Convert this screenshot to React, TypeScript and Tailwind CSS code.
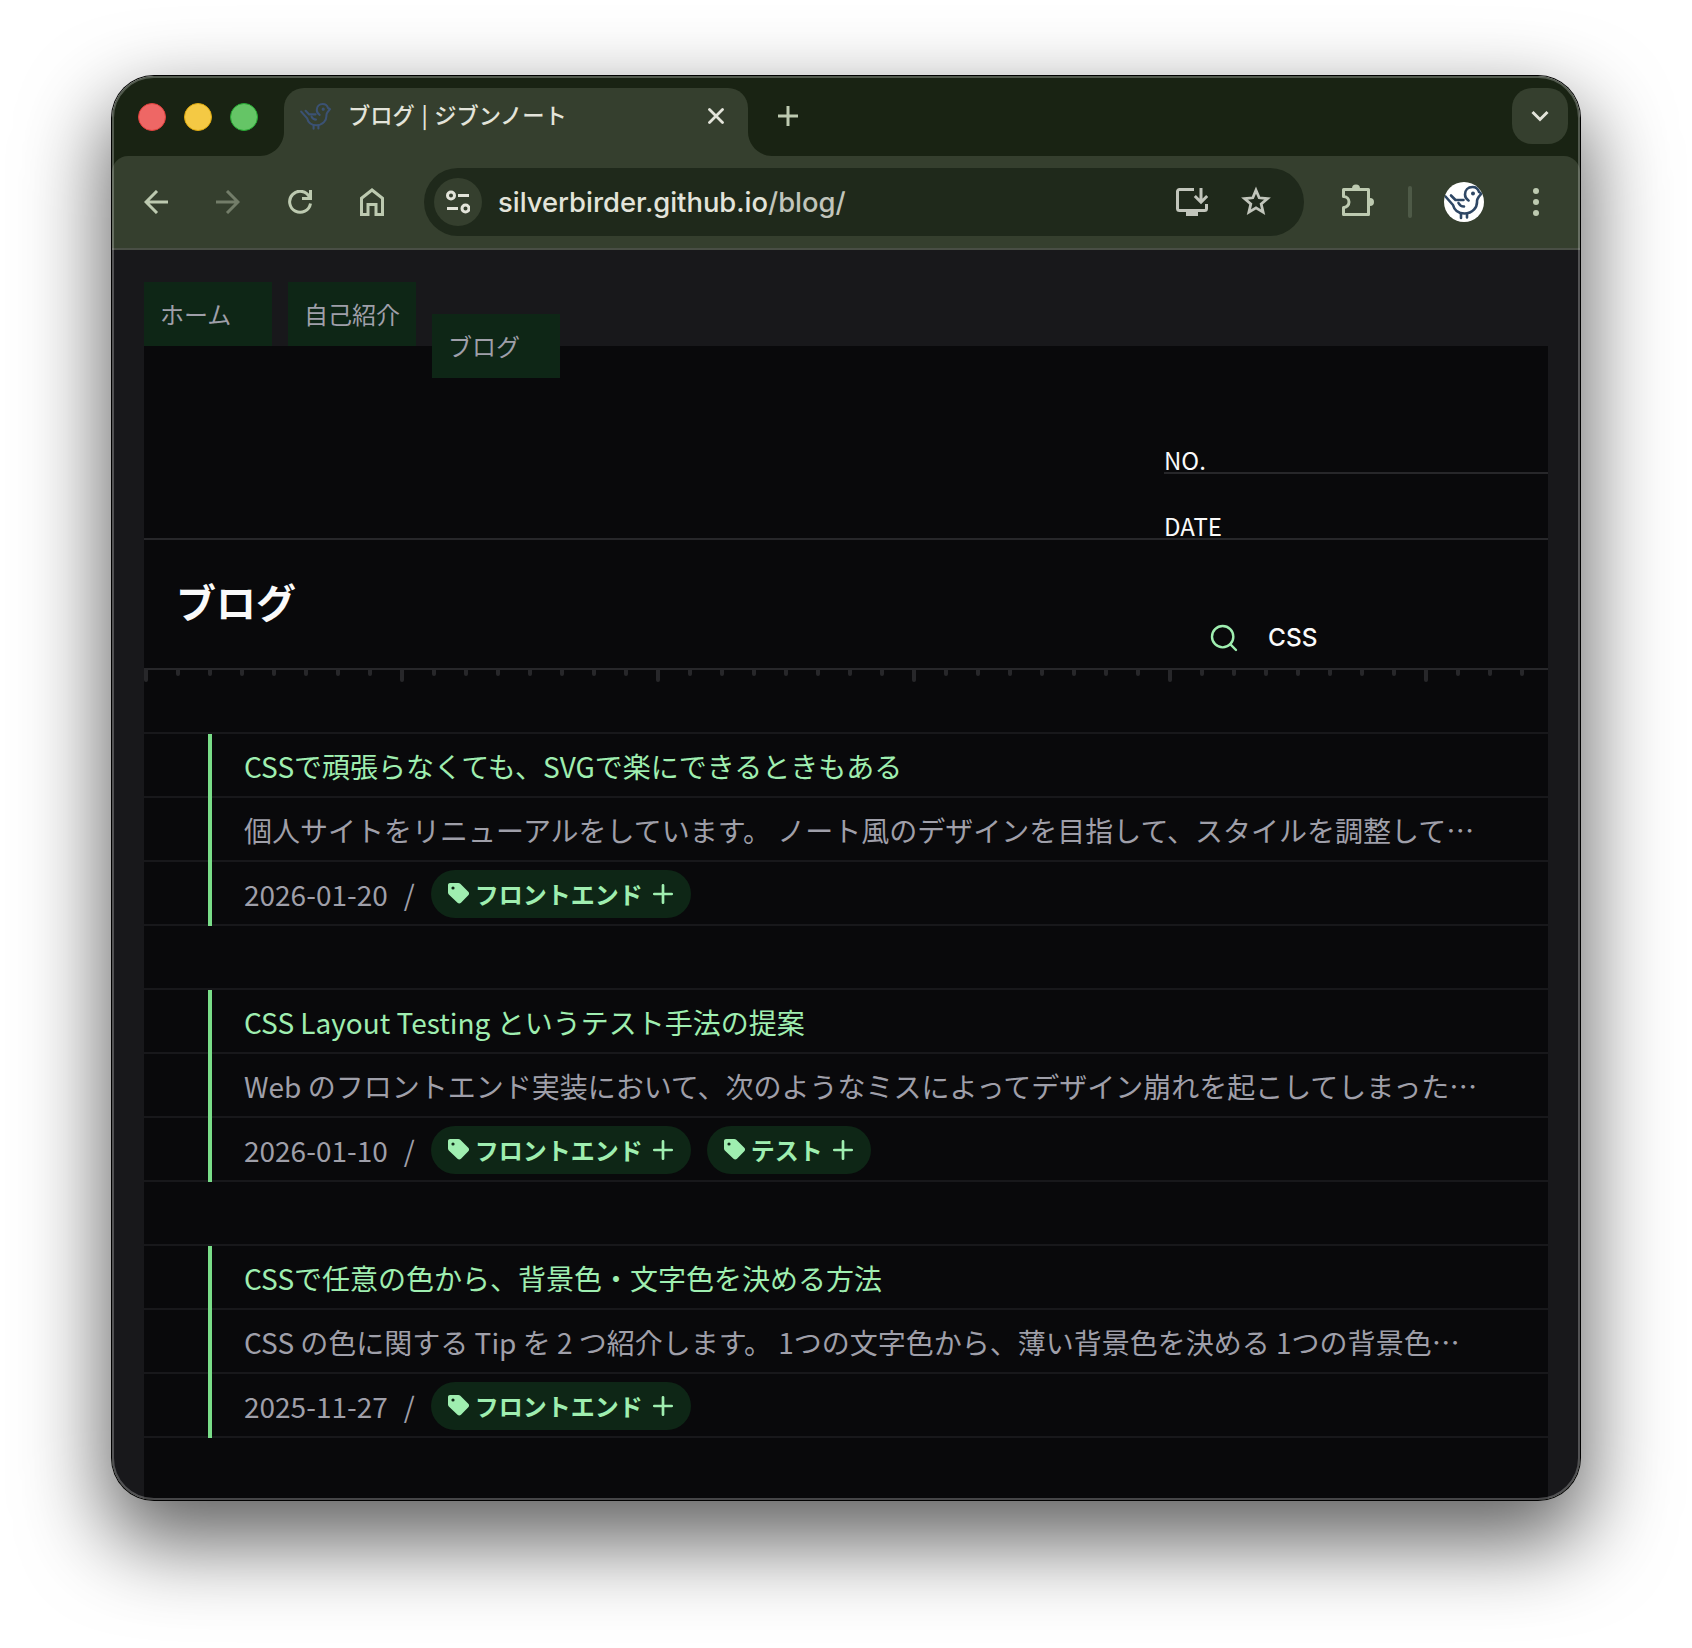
import React from "react";
import { Search } from "lucide-react";

type Post = {
    title: string;
    summary: string;
    date: string;
    tags: string[];
};

const posts: Post[] = [
    {
        title: "CSSで頑張らなくても、SVGで楽にできるときもある",
        summary:
            "個人サイトをリニューアルをしています。 ノート風のデザインを目指して、スタイルを調整して…",
        date: "2026-01-20",
        tags: ["フロントエンド"],
    },
    {
        title: "CSS Layout Testing というテスト手法の提案",
        summary:
            "Web のフロントエンド実装において、次のようなミスによってデザイン崩れを起こしてしまった…",
        date: "2026-01-10",
        tags: ["フロントエンド", "テスト"],
    },
    {
        title: "CSSで任意の色から、背景色・文字色を決める方法",
        summary:
            "CSS の色に関する Tip を 2 つ紹介します。 1つの文字色から、薄い背景色を決める 1つの背景色…",
        date: "2025-11-27",
        tags: ["フロントエンド"],
    },
];

function Bird({ className }: { className: string }) {
    return (
        <svg
            className={className}
            viewBox="0 0 40 40"
            fill="none"
            stroke="currentColor"
            strokeWidth="2.6"
            strokeLinecap="round"
            strokeLinejoin="round"
        >
            <path d="M1.5 14.5 9 23c1.500 6 6 8.500 11.500 8.500 8 0 13-6 12.500-12.500 0-2 1-3 2-4.500l2.500-3-2.500-1.500C34 6.500 31.500 5 28.500 5c-4.500 0-7.500 3-7.500 7.500 0 2 .5 4 3.500 6" />
            <path d="M7 13.500 11.500 18h8M14.500 21c1 2 3 3.500 5.500 3.500M17 32v4M23 32v3.500" />
            <circle cx="29" cy="11.500" r="1.200" fill="currentColor" strokeWidth="1.600" />
        </svg>
    );
}

function TabStrip() {
    return (
        <div className="flex h-20 items-start pl-[26px] pr-3 pt-3">
            <div className="mt-[15px] flex gap-[18px]">
                <span className="size-7 rounded-full border border-[#e0403d] bg-[#ee6765]" />
                <span className="size-7 rounded-full border border-[#dda90f] bg-[#f4c944]" />
                <span className="size-7 rounded-full border border-[#25a932] bg-[#65c566]" />
            </div>
            <div className="relative ml-[26px] flex h-[68px] w-[464px] rounded-t-[20px] bg-[#353f2e] pl-4">
                <svg
                    className="absolute -left-6 bottom-0 size-6 text-[#353f2e]"
                    viewBox="0 0 24 24"
                >
                    <path d="M24 0v24H0C13 24 24 13 24 0z" fill="currentColor" />
                </svg>
                <svg
                    className="absolute -right-6 bottom-0 size-6 text-[#353f2e]"
                    viewBox="0 0 24 24"
                >
                    <path d="M0 0v24h24C11 24 0 13 0 0z" fill="currentColor" />
                </svg>
                <Bird className="mt-3 size-8 text-[#3b5274]" />
                <span className="ml-4 mt-2.5 whitespace-nowrap font-['Noto_Sans_CJK_JP',sans-serif] text-[22.3px] font-medium leading-8 text-[#e3e4da] [word-spacing:1.5px]">
                    ブログ | ジブンノート
                </span>
                <svg
                    className="ml-auto mr-6 mt-5 size-4"
                    viewBox="0 0 16 16"
                    stroke="#e3e4da"
                    strokeWidth="2.8"
                    strokeLinecap="round"
                >
                    <path d="M1.500 1.500l13 13M14.500 1.500l-13 13" />
                </svg>
            </div>
            <svg
                className="ml-[30px] mt-[18px] size-5"
                viewBox="0 0 20 20"
                stroke="#bdcab0"
                strokeWidth="3"
            >
                <path d="M0 10h20M10 0v20" />
            </svg>
            <div className="ml-auto flex size-14 items-center justify-center rounded-[20px] bg-[#353f2e]">
                <svg
                    className="h-3 w-[18px]"
                    viewBox="0 0 18 12"
                    fill="none"
                    stroke="#e3e4da"
                    strokeWidth="3"
                >
                    <path d="M1.500 2 9 9.500 16.500 2" />
                </svg>
            </div>
        </div>
    );
}

function Toolbar() {
    return (
        <div className="flex h-[94px] items-center rounded-t-[16px] border-b-2 border-[#494e45] bg-[#353f2e] pl-8 text-[#bdcab0]">
            <svg className="size-6" viewBox="0 0 24 24" fill="none" stroke="currentColor" strokeWidth="3">
                <path d="M24 12H2.500M13 1 2 12l11 11" />
            </svg>
            <svg
                className="ml-12 size-6 text-[#737d69]"
                viewBox="0 0 24 24"
                fill="none"
                stroke="currentColor"
                strokeWidth="3"
            >
                <path d="M0 12h21.500M11 1l11 11-11 11" />
            </svg>
            <svg className="ml-12 size-6" viewBox="0 0 24 24" fill="none" stroke="currentColor" strokeWidth="3">
                <path d="M21.500 7A10.500 10.500 0 1 0 22.500 13.500M22.500 0v8.500H14" />
            </svg>
            <svg className="ml-12 h-7 w-6" viewBox="0 0 24 28" fill="none" stroke="currentColor" strokeWidth="3">
                <path d="M1.500 10.200 12 2l10.500 8.200v16.300H16V16.500H8v10H1.500z" />
            </svg>
            <div className="ml-10 flex h-[68px] w-[880px] items-center rounded-full bg-[#1f291b] pl-2.5 pr-[33px]">
                <div className="flex size-12 items-center justify-center rounded-full bg-[#353f2e]">
                    <svg
                        className="size-6"
                        viewBox="0 0 24 24"
                        fill="none"
                        stroke="#e3e4da"
                        strokeWidth="3"
                    >
                        <circle cx="5" cy="5.500" r="3.500" />
                        <path d="M12 5.500h11M1 18.500h11" />
                        <circle cx="19.500" cy="18.500" r="3.500" />
                    </svg>
                </div>
                <span className="ml-4 font-['Inter',sans-serif] text-[27.4px] font-medium leading-8 text-[#e3e4da]">
                    silverbirder.github.io<span className="text-[#c1c5bb]">/blog/</span>
                </span>
                <svg
                    className="ml-auto h-7 w-8"
                    viewBox="0 0 32 28"
                    fill="none"
                    stroke="#c1c5bb"
                    strokeWidth="3"
                >
                    <path d="M18 1.500H3.500a2 2 0 0 0-2 2v17a2 2 0 0 0 2 2h25a2 2 0 0 0 2-2V16" />
                    <path d="M10 24h12v4H10z" fill="#c1c5bb" stroke="none" />
                    <path d="M25 0v14M18.800 8l6.200 6.200L31.200 8" />
                </svg>
                <svg
                    className="ml-[33px] mb-0.5 size-[30px]"
                    viewBox="0 0 30 30"
                    fill="none"
                    stroke="#c1c5bb"
                    strokeWidth="2.8"
                >
                    <path d="M15 4.200 18.200 11.800 26.500 12.500 20.200 18 22.100 26.200 15 21.900 7.900 26.200 9.800 18 3.500 12.500 11.800 11.800z" />
                </svg>
            </div>
            <svg
                className="ml-[38px] mb-1 h-8 w-8"
                viewBox="0 0 32 32"
                fill="none"
                stroke="currentColor"
                strokeWidth="3"
                strokeLinejoin="round"
            >
                <path d="M1.500 5.500h25v25h-25V23.500a5.500 5.500 0 0 0 0-11z" />
                <path d="M10 4.500a4 4 0 0 1 8 0zM28 14a4 4 0 0 1 0 8z" fill="currentColor" stroke="none" />
            </svg>
            <div className="ml-[34px] h-8 w-1 rounded-full bg-[#4e5a47]" />
            <div className="ml-8 flex size-10 items-center justify-center overflow-hidden rounded-full bg-white">
                <Bird className="size-10 text-[#2e4765]" />
            </div>
            <svg className="ml-[49px] h-7 w-1.5" viewBox="0 0 6 28" fill="currentColor">
                <circle cx="3" cy="3" r="3" />
                <circle cx="3" cy="14" r="3" />
                <circle cx="3" cy="25" r="3" />
            </svg>
        </div>
    );
}

function Tag({ name }: { name: string }) {
    return (
        <span className="flex h-12 items-center rounded-full bg-[#0e2616] pl-4 pr-4 text-2xl font-bold">
            <svg className="size-6" viewBox="0 0 24 24" fill="currentColor">
                <path
                    fillRule="evenodd"
                    d="M3 1h8.300c.8 0 1.500.3 2 .8l8 8c1 1 1 2.500 0 3.500l-7.300 7.400c-1 1-2.500 1-3.500 0L1.800 12.500c-.5-.5-.8-1.200-.8-2V3c0-1.100.9-2 2-2zM6 4.400a1.600 1.600 0 1 0 0 3.200 1.600 1.600 0 0 0 0-3.200z"
                />
            </svg>
            <span className="ml-1">{name}</span>
            <svg
                className="ml-2 size-6"
                viewBox="0 0 24 24"
                stroke="currentColor"
                strokeWidth="2.7"
                strokeLinecap="round"
            >
                <path d="M12 3.300v17.400M3.300 12h17.400" />
            </svg>
        </span>
    );
}

function PostItem({ post }: { post: Post }) {
    return (
        <article className="relative">
            <h2 className="h-16 truncate border-b-2 border-[#18181b] pl-[100px] text-[28px] leading-[64px] text-[#9feeb0]">
                {post.title}
            </h2>
            <p className="h-16 whitespace-nowrap border-b-2 border-[#18181b] pl-[100px] text-[28px] leading-[64px] text-[#9f9fa9]">
                {post.summary}
            </p>
            <div className="flex h-16 items-center gap-4 border-b-2 border-[#18181b] pl-[100px] pt-0.5 text-[28px] text-[#9f9fa9]">
                <time>{post.date}</time>
                <span>/</span>
                <div className="flex gap-4 text-[#9feeb0]">
                    {post.tags.map((tag) => (
                        <Tag key={tag} name={tag} />
                    ))}
                </div>
            </div>
            {/* margin line, runs over the ruled lines */}
            <span className="absolute inset-y-0 left-16 w-1 bg-[#79dd88]" />
        </article>
    );
}

function Ruler() {
    return (
        <div className="flex h-[66px] border-t-2 border-[#27272a]">
            {Array.from({ length: 44 }, (_, i) => (
                <span
                    key={i}
                    className={
                        i % 8 === 0
                            ? "mr-7 h-3 w-1 shrink-0 rounded-b-sm bg-[#27272a]"
                            : "mr-7 h-1.5 w-1 shrink-0 rounded-b-sm bg-[#27272a]"
                    }
                />
            ))}
        </div>
    );
}

export default function App() {
    return (
        <main className="h-[1648px] w-[1692px] overflow-hidden bg-white pl-28 pt-[76px]">
            <div className="relative h-[1424px] w-[1468px] rounded-[42px] shadow-[0_0_0_1px_#000,0_36px_84px_6px_rgba(0,0,0,0.62)]">
                <div className="h-full overflow-hidden rounded-[42px] bg-[#192313]">
                    <TabStrip />
                    <Toolbar />
                    <div className="h-[1252px] bg-[#18181b] px-8 pt-8 font-['Noto_Sans_CJK_JP',sans-serif]">
                        <nav className="flex h-16 gap-4 text-2xl text-[#9f9fa9]">
                            <a className="h-16 w-32 bg-[#0e2616] pl-4 leading-[64px]">ホーム</a>
                            <a className="h-16 w-32 bg-[#0e2616] pl-4 leading-[64px]">自己紹介</a>
                            <a className="z-10 mt-8 h-16 w-32 bg-[#0e2616] pl-4 leading-[64px]">ブログ</a>
                        </nav>
                        <div className="h-full bg-[#09090b] text-[#fafafa]">
                            <header className="flex h-[194px] flex-col items-end justify-end border-b-2 border-[#27272a] text-2xl">
                                <div className="h-[42px] w-96 border-b-2 border-[#27272a] leading-[56px]">
                                    NO.
                                </div>
                                <div className="h-16 w-96 pt-6 leading-[56px]">DATE</div>
                            </header>
                            <div className="flex h-32 justify-between">
                                <h1 className="pl-8 text-[40px] font-bold leading-[122px]">ブログ</h1>
                                <div className="flex w-[344px] items-center gap-7 pt-[68px]">
                                    <Search
                                        size={32}
                                        strokeWidth={1.8}
                                        className="ml-1 text-[#9feeb0]"
                                    />
                                    <span className="pb-0.5 font-['Inter',sans-serif] text-[24.4px] font-medium">
                                        CSS
                                    </span>
                                </div>
                            </div>
                            <Ruler />
                            {posts.map((post) => (
                                <div key={post.date} className="-mt-0.5 mb-16 border-t-2 border-[#18181b]">
                                    <PostItem post={post} />
                                </div>
                            ))}
                        </div>
                    </div>
                </div>
                {/* thin highlight along the window edge */}
                <div className="pointer-events-none absolute inset-0 rounded-[42px] border-2 border-white/25" />
            </div>
        </main>
    );
}
